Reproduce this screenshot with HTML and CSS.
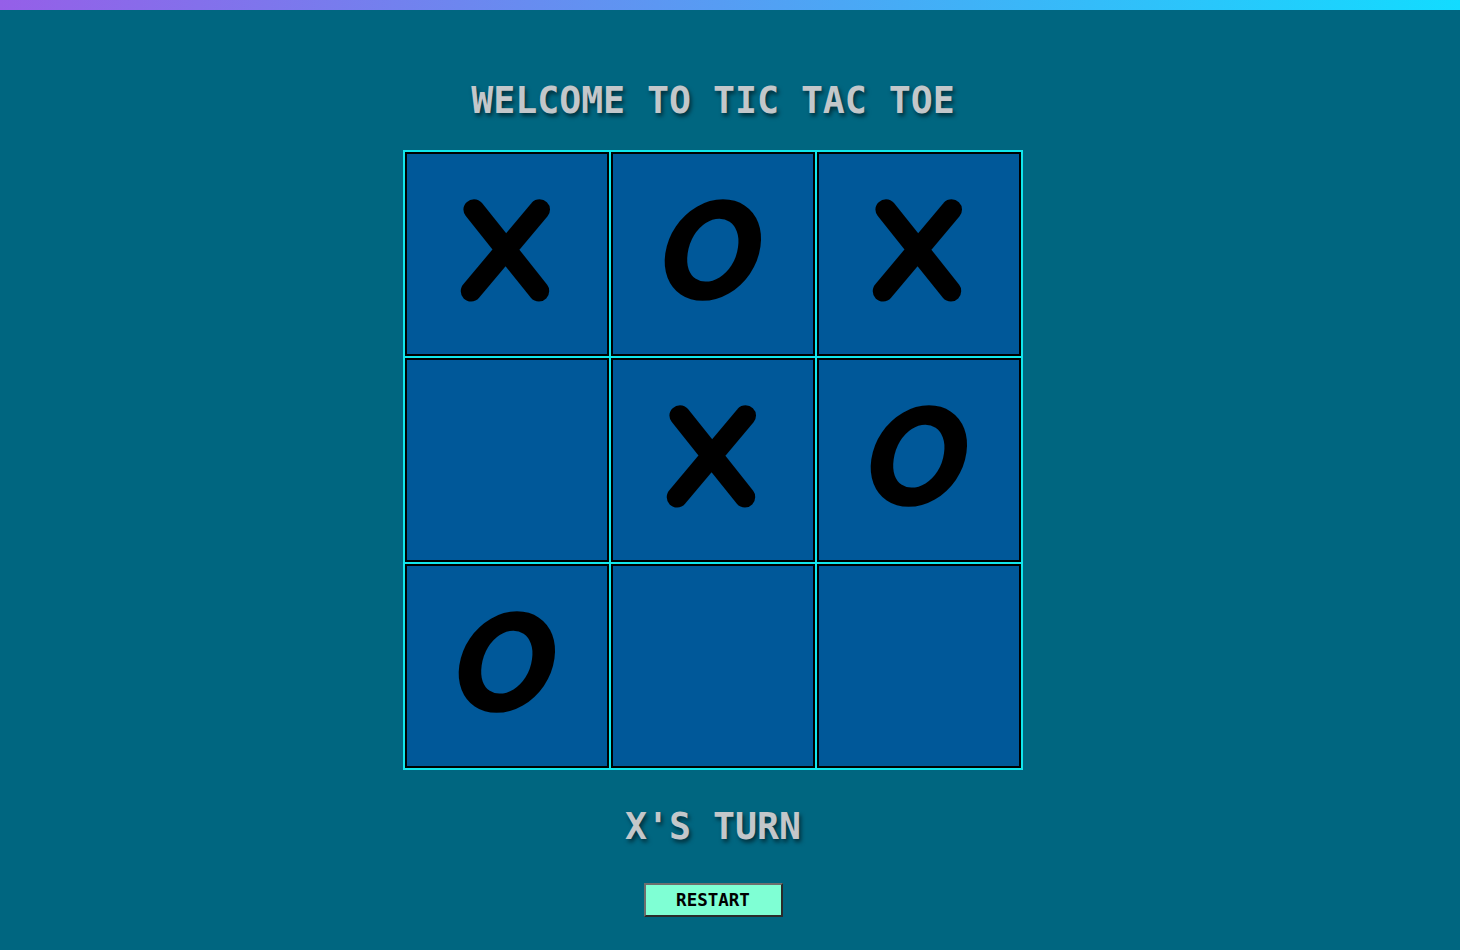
FILE: index.html
```html
<!DOCTYPE html>
<html lang="en">
<head>
<meta charset="utf-8">
<title>Tic Tac Toe</title>
<link rel="stylesheet" href="styles.css">
</head>
<body>
<div class="topbar"></div>
<main class="game">
  <h1 class="title">WELCOME TO TIC TAC TOE</h1>
  <div class="board">
    <div class="cell"><span class="mark mark-x">X</span></div>
    <div class="cell"><span class="mark mark-o">O</span></div>
    <div class="cell"><span class="mark mark-x">X</span></div>
    <div class="cell"></div>
    <div class="cell"><span class="mark mark-x">X</span></div>
    <div class="cell"><span class="mark mark-o">O</span></div>
    <div class="cell"><span class="mark mark-o">O</span></div>
    <div class="cell"></div>
    <div class="cell"></div>
  </div>
  <h2 class="turn">X'S TURN</h2>
  <button class="restart" type="button">RESTART</button>
</main>
</body>
</html>
```

FILE: styles.css
```css
* { box-sizing: border-box; }

html, body {
  margin: 0;
  padding: 0;
}

body {
  background: #006680;
  height: 950px;
  overflow: hidden;
  font-family: "DejaVu Sans Mono", monospace;
}

.topbar {
  height: 10px;
  background: linear-gradient(to right, #955fe8, #5c97f2 45%, #12dcff);
}

.game {
  width: 1426px;
  display: flex;
  flex-direction: column;
  align-items: center;
}

.title,
.turn {
  margin: 0;
  font-family: "DejaVu Sans Mono", monospace;
  font-weight: bold;
  font-size: 36.5px;
  line-height: 42px;
  color: #c3c7ca;
  text-shadow: 2px 3px 4px rgba(0, 0, 0, 0.55);
}

.title {
  margin-top: 70px;
}

.board {
  margin-top: 28px;
  display: grid;
  grid-template-columns: repeat(3, 204px);
  grid-template-rows: repeat(3, 204px);
  gap: 2px;
  padding: 2px;
  background: #12e6ec;
}

.cell {
  border: 2px solid #000;
  background: #005899;
  display: flex;
  align-items: center;
  justify-content: center;
}

.mark {
  display: inline-block;
  font-family: "Comic Sans MS", "Comic Neue", cursive;
  font-weight: bold;
  font-size: 140px;
  line-height: 1;
  color: #000;
  -webkit-text-stroke: 7px #000;
  margin-top: -4px;
}

.mark-o {
  -webkit-text-stroke: 6px #000;
  transform: skewX(-8deg) scaleX(1.12);
}

.turn {
  margin-top: 36px;
}

.restart {
  margin-top: 35px;
  width: 139px;
  height: 34px;
  padding: 0;
  border: 2px solid;
  border-color: #6e6e6e #2b2b2b #2b2b2b #6e6e6e;
  background: #7fffd4;
  color: #000;
  font-family: "DejaVu Sans Mono", monospace;
  font-weight: bold;
  font-size: 17.5px;
  line-height: 30px;
}
```
